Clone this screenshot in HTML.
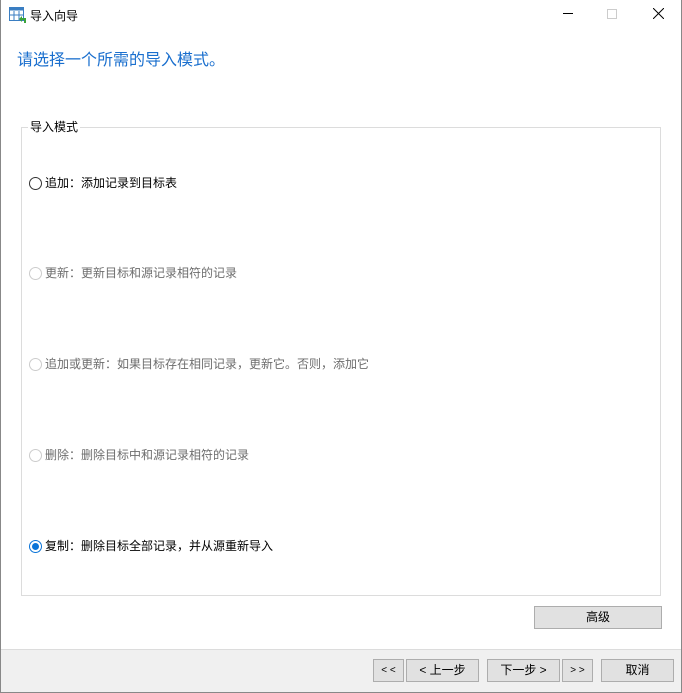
<!DOCTYPE html>
<html><head><meta charset="utf-8"><style>
*{margin:0;padding:0;box-sizing:border-box}
body{width:682px;height:693px;position:relative;background:#fff;font-family:"Liberation Sans","Microsoft YaHei","Noto Sans CJK SC",sans-serif;font-size:12px;color:#000;overflow:hidden}
.frame{position:absolute;left:0;top:0;width:682px;height:693px;border:1px solid #888;border-top:none}
.abs{position:absolute;white-space:nowrap}
.radio{position:absolute;left:29px;width:13px;height:13px;border:1px solid #333;border-radius:50%;background:#fff}
.radio.dis{border-color:#ccc}
.radio.on{border-color:#0a74d8}
.radio.on::after{content:"";position:absolute;left:2px;top:2px;width:7px;height:7px;border-radius:50%;background:#0a74d8}
.lbl{position:absolute;left:45px;white-space:nowrap;line-height:14px}
.dis-t{color:#6d6d6d}
.btn{position:absolute;height:23px;background:#e1e1e1;border:1px solid #adadad;text-align:center;line-height:21px;font-size:12px}
</style></head><body>
<div class="frame"></div>
<svg class="abs" style="left:9px;top:7px" width="18" height="17" viewBox="0 0 18 17">
<rect x="0.5" y="0.5" width="14" height="13" fill="#fff" stroke="#3a7ec2"/>
<rect x="0.5" y="0.5" width="14" height="3" fill="#3a7ec2"/>
<line x1="5" y1="4" x2="5" y2="14" stroke="#3a7ec2"/><line x1="10" y1="4" x2="10" y2="14" stroke="#3a7ec2"/>
<line x1="1" y1="8" x2="14" y2="8" stroke="#3a7ec2"/>
<path d="M10 12 L13 9 L13 11 L17 11 L17 16 L15 16 L15 13 L13 13 L13 15 Z" fill="#3aa33a"/>
</svg>
<div class="abs" style="left:30px;top:7px;font-size:12px">导入向导</div>
<div class="abs" style="left:563px;top:13px;width:10px;height:1px;background:#000"></div>
<div class="abs" style="left:607px;top:9px;width:10px;height:10px;border:1px solid #ccc"></div>
<svg class="abs" style="left:653px;top:8px" width="11" height="11"><path d="M0 0L11 11M11 0L0 11" stroke="#000" stroke-width="1"/></svg>
<div class="abs" style="left:17px;top:46px;font-size:16px;color:#1a6fce">请选择一个所需的导入模式。</div>
<div class="abs" style="left:21px;top:127px;width:640px;height:469px;border:1px solid #dcdcdc"></div>
<div class="abs" style="left:28px;top:120px;background:#fff;padding:0 2px;line-height:14px">导入模式</div>
<div class="radio" style="top:177px"></div><div class="lbl" style="top:176px">追加：添加记录到目标表</div>
<div class="radio dis" style="top:267px"></div><div class="lbl dis-t" style="top:266px">更新：更新目标和源记录相符的记录</div>
<div class="radio dis" style="top:358px"></div><div class="lbl dis-t" style="top:357px">追加或更新：如果目标存在相同记录，更新它。否则，添加它</div>
<div class="radio dis" style="top:449px"></div><div class="lbl dis-t" style="top:448px">删除：删除目标中和源记录相符的记录</div>
<div class="radio on" style="top:540px"></div><div class="lbl" style="top:539px">复制：删除目标全部记录，并从源重新导入</div>
<div class="btn" style="left:534px;top:606px;width:128px">高级</div>
<div class="abs" style="left:1px;top:649px;width:680px;height:43px;background:#f0f0f0;border-top:1px solid #dcdcdc"></div>
<div class="btn" style="left:373px;top:659px;width:31px;font-size:10px">&lt; &lt;</div>
<div class="btn" style="left:406px;top:659px;width:73px">&lt; 上一步</div>
<div class="btn" style="left:487px;top:659px;width:73px">下一步 &gt;</div>
<div class="btn" style="left:562px;top:659px;width:31px;font-size:10px">&gt; &gt;</div>
<div class="btn" style="left:601px;top:659px;width:73px">取消</div>
</body></html>
